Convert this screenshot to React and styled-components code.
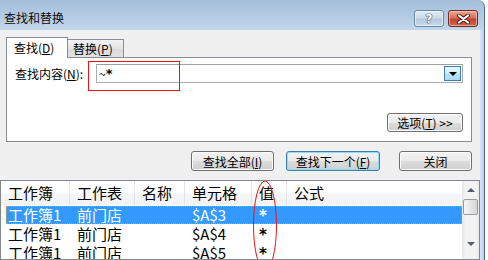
import React from "react";
import styled, { createGlobalStyle, css } from "styled-components";

const Global = createGlobalStyle`
  html, body { margin: 0; padding: 0; background: #ffffff; }
  body {
    font-family: "Noto Sans CJK SC", "Noto Sans", sans-serif;
    font-size: 12px;
    color: #000;
  }
  #root { width: 488px; height: 260px; overflow: hidden; }
`;

const Window = styled.div`
  box-sizing: border-box;
  width: 485px;
  height: 260px;
  border-right: 1px solid #4f6c8e;
  border-top-right-radius: 7px;
  overflow: hidden;
  background: linear-gradient(#a3bedb 0px, #c2d6ec 30px, #c9dcf0 100%);
  display: flex;
  flex-direction: column;
`;

const TitleBar = styled.div`
  height: 30px;
  display: flex;
  align-items: flex-start;
  padding-left: 4px;
`;

const Title = styled.div`
  margin-top: 11px;
  font-size: 12px;
  line-height: 14px;
  color: #0d0d0d;
`;

const CaptionButtons = styled.div`
  margin-left: auto;
  margin-top: 10px;
  margin-right: 6px;
  display: flex;
  gap: 4px;
`;

const CaptionButton = styled.div`
  box-sizing: border-box;
  width: 30px;
  height: 17px;
  border-radius: 3px;
  display: flex;
  align-items: center;
  justify-content: center;
  ${(p) =>
    p.$close
      ? css`
          border: 1px solid #6e2b22;
          background: linear-gradient(#eba796 0%, #d9705d 45%, #c4432c 55%, #cf6a4e 100%);
          box-shadow: inset 0 0 0 1px rgba(255, 210, 200, 0.6);
        `
      : css`
          border: 1px solid #6b87a6;
          background: linear-gradient(#e2ebf5 0%, #ccdaea 45%, #b5c9df 55%, #c8d9ec 100%);
          box-shadow: inset 0 0 0 1px rgba(255, 255, 255, 0.55);
        `}
`;

const HelpGlyph = styled.span`
  font-family: "DejaVu Sans", sans-serif;
  font-weight: bold;
  font-size: 12px;
  line-height: 12px;
  color: #ffffff;
  text-shadow: 0 0 1px #2c3e55, 0 0 1px #2c3e55, 0 0 1px #2c3e55;
`;

const Body = styled.div`
  display: flex;
  flex: 1;
`;

const Client = styled.div`
  width: 480px;
  height: 230px;
  background: #f0f0f0;
  display: flex;
  flex-direction: column;
`;

const FrameEdge = styled.div`
  width: 4px;
  background: linear-gradient(to right, #dae6f3, #b8cde5);
`;

const TopSection = styled.div`
  padding: 7px 8px 0 6px;
  display: flex;
  flex-direction: column;
`;

const TabRow = styled.div`
  display: flex;
  align-items: flex-end;
  height: 20px;
`;

const Tab = styled.div`
  box-sizing: border-box;
  width: ${(p) => p.$w}px;
  border: 1px solid #898c95;
  font-size: 12px;
  ${(p) =>
    p.$active
      ? css`
          height: 21px;
          border-bottom: none;
          margin-bottom: -1px;
          position: relative;
          z-index: 1;
          background: #ffffff;
          padding-left: 7px;
          line-height: 19px;
        `
      : css`
          height: 18px;
          border-left: none;
          border-bottom: none;
          background: linear-gradient(#f3f3f3, #e4e4e4 50%, #d9d9d9 50%, #e2e2e2);
          padding-left: 5px;
          line-height: 17px;
        `}
`;

const Key = styled.span`
  text-decoration: underline;
`;

const Panel = styled.div`
  box-sizing: border-box;
  height: 85px;
  border: 1px solid #898c95;
  background: #ffffff;
  padding: 6px 8px 9px 8px;
  display: flex;
  flex-direction: column;
  position: relative;
`;

const SearchRow = styled.div`
  display: flex;
  align-items: center;
  height: 19px;
`;

const Label = styled.div`
  width: 81px;
  font-size: 12px;
  line-height: 19px;
  white-space: nowrap;
`;

const Input = styled.div`
  flex: 1;
  box-sizing: border-box;
  height: 19px;
  border: 1px solid #a9acb2;
  border-top-color: #9a9ea5;
  display: flex;
  align-items: center;
  padding-left: 2px;
  font-size: 12px;
`;

const Star = styled.span`
  font-family: "DejaVu Sans", sans-serif;
  font-weight: bold;
  font-size: ${(p) => p.$size || 13}px;
`;

const DropButton = styled.div`
  margin-left: auto;
  margin-right: 1px;
  box-sizing: border-box;
  width: 17px;
  height: 15px;
  border: 1px solid #3c7fb1;
  background: linear-gradient(#e8f5fd 0%, #d4eefc 50%, #bfe4f9 50%, #a9daf5 100%);
  display: flex;
  align-items: center;
  justify-content: center;
`;

const DownTriangle = styled.div`
  width: 0;
  height: 0;
  border-left: 4px solid transparent;
  border-right: 4px solid transparent;
  border-top: 4px solid ${(p) => p.$color || "#000"};
`;

const UpTriangle = styled.div`
  width: 0;
  height: 0;
  border-left: 4px solid transparent;
  border-right: 4px solid transparent;
  border-bottom: 4px solid ${(p) => p.$color || "#000"};
`;

const Button = styled.div`
  box-sizing: border-box;
  width: ${(p) => p.$w}px;
  height: ${(p) => p.$h || 20}px;
  border: 1px solid ${(p) => (p.$default ? "#3c7fb1" : "#707070")};
  border-radius: 3px;
  background: linear-gradient(#f2f2f2 0%, #ebebeb 50%, #dddddd 50%, #cfcfcf 100%);
  box-shadow: inset 0 0 0 1px ${(p) => (p.$default ? "#92dcf7" : "#fbfbfb")};
  display: flex;
  align-items: center;
  justify-content: center;
  font-size: 12px;
  white-space: nowrap;
`;

const OptionsButton = styled(Button)`
  margin-top: auto;
  align-self: flex-end;
`;

const ButtonRow = styled.div`
  margin-top: 9px;
  display: flex;
  justify-content: flex-end;
  gap: 12px;
`;

const CloseButton = styled(Button)`
  margin-left: 7px;
`;

const Annotation = styled.div`
  position: absolute;
  left: 81px;
  top: 3px;
  width: 92px;
  height: 30px;
  box-sizing: border-box;
  border: 1px solid #ee1111;
  pointer-events: none;
`;

const List = styled.div`
  margin-top: 9px;
  box-sizing: border-box;
  width: 480px;
  height: 84px;
  border: 1px solid #828790;
  background: #ffffff;
  display: flex;
  position: relative;
  overflow: hidden;
`;

const ListBody = styled.div`
  flex: 1;
  display: flex;
  flex-direction: column;
`;

const columns = "69px 65px 50px 67px 35px 1fr";

const HeaderRow = styled.div`
  display: grid;
  grid-template-columns: ${columns};
  height: 24px;
  background: linear-gradient(#ffffff 0%, #ffffff 45%, #f5f6f7 55%, #f1f2f4 100%);
`;

const HeaderCell = styled.div`
  padding-left: 7px;
  font-size: 15px;
  line-height: 24px;
  border-right: ${(p) => (p.$last ? "none" : "1px solid #e3e4e6")};
  white-space: nowrap;
`;

const Row = styled.div`
  display: grid;
  grid-template-columns: ${columns};
  height: 19px;
  position: relative;
  color: ${(p) => (p.$selected ? "#ffffff" : "#000000")};
  ${(p) =>
    p.$selected &&
    css`
      &::before {
        content: "";
        position: absolute;
        left: 5px;
        right: 0;
        top: 1px;
        bottom: 0;
        background: #3399ff;
        border: 1px dotted #e8953a;
      }
    `}
`;

const Cell = styled.div`
  position: relative;
  padding-left: 7px;
  font-size: 15px;
  line-height: 19px;
  white-space: nowrap;
`;

const Scrollbar = styled.div`
  width: 17px;
  background: linear-gradient(to right, #e6e6e6, #f3f3f3 20%, #f3f3f3 80%, #e9e9e9);
  display: flex;
  flex-direction: column;
  align-items: center;
`;

const ArrowBox = styled.div`
  height: 17px;
  width: 17px;
  display: flex;
  align-items: center;
  justify-content: center;
  margin-bottom: ${(p) => p.$mb || 0}px;
`;

const Thumb = styled.div`
  box-sizing: border-box;
  width: 15px;
  height: 16px;
  margin-top: 1px;
  border: 1px solid #9a9a9a;
  border-radius: 2px;
  background: linear-gradient(to right, #f7f7f7, #e6e6e6 50%, #d5d5d5);
`;

const Spacer = styled.div`
  flex: 1;
`;

const EllipseMark = styled.svg`
  position: absolute;
  left: 249px;
  top: -1px;
  overflow: visible;
  pointer-events: none;
`;

const rows = [
  { book: "工作簿1", sheet: "前门店", cell: "$A$3", value: "*", selected: true },
  { book: "工作簿1", sheet: "前门店", cell: "$A$4", value: "*" },
  { book: "工作簿1", sheet: "前门店", cell: "$A$5", value: "*" },
];

export default function App() {
  return (
    <>
      <Global />
      <Window>
        <TitleBar>
          <Title>查找和替换</Title>
          <CaptionButtons>
            <CaptionButton>
              <HelpGlyph>?</HelpGlyph>
            </CaptionButton>
            <CaptionButton $close>
              <svg width="13" height="10" viewBox="0 0 13 10">
                <path d="M2 1.5 L11 8.5 M11 1.5 L2 8.5" stroke="#4a1a12" strokeWidth="4" strokeLinecap="round" />
                <path d="M2 1.5 L11 8.5 M11 1.5 L2 8.5" stroke="#ffffff" strokeWidth="2.2" strokeLinecap="round" />
              </svg>
            </CaptionButton>
          </CaptionButtons>
        </TitleBar>
        <Body>
          <Client>
            <TopSection>
              <TabRow>
                <Tab $active $w={62}>
                  查找(<Key>D</Key>)
                </Tab>
                <Tab $w={56}>
                  替换(<Key>P</Key>)
                </Tab>
              </TabRow>
              <Panel>
                <SearchRow>
                  <Label>
                    查找内容(<Key>N</Key>):
                  </Label>
                  <Input>
                    ~<Star>*</Star>
                    <DropButton>
                      <DownTriangle />
                    </DropButton>
                  </Input>
                </SearchRow>
                <OptionsButton $w={76} $h={19}>
                  选项(<Key>T</Key>) &gt;&gt;
                </OptionsButton>
                <Annotation />
              </Panel>
              <ButtonRow>
                <Button $w={83}>
                  查找全部(<Key>I</Key>)
                </Button>
                <Button $w={94} $default>
                  查找下一个(<Key>F</Key>)
                </Button>
                <CloseButton $w={73}>关闭</CloseButton>
              </ButtonRow>
            </TopSection>
            <List>
              <ListBody>
                <HeaderRow>
                  <HeaderCell>工作簿</HeaderCell>
                  <HeaderCell>工作表</HeaderCell>
                  <HeaderCell>名称</HeaderCell>
                  <HeaderCell>单元格</HeaderCell>
                  <HeaderCell>值</HeaderCell>
                  <HeaderCell $last>公式</HeaderCell>
                </HeaderRow>
                {rows.map((r, i) => (
                  <Row key={i} $selected={r.selected}>
                    <Cell>{r.book}</Cell>
                    <Cell>{r.sheet}</Cell>
                    <Cell />
                    <Cell>{r.cell}</Cell>
                    <Cell>
                      <Star $size={15}>{r.value}</Star>
                    </Cell>
                    <Cell />
                  </Row>
                ))}
              </ListBody>
              <Scrollbar>
                <ArrowBox>
                  <UpTriangle $color="#555d68" />
                </ArrowBox>
                <Thumb />
                <Spacer />
                <ArrowBox $mb={7}>
                  <DownTriangle $color="#555d68" />
                </ArrowBox>
              </Scrollbar>
              <EllipseMark width="30" height="92" viewBox="0 0 30 92">
                <ellipse cx="15" cy="45.5" rx="11.5" ry="44.5" fill="none" stroke="#ee1111" strokeWidth="1" />
              </EllipseMark>
            </List>
          </Client>
          <FrameEdge />
        </Body>
      </Window>
    </>
  );
}
